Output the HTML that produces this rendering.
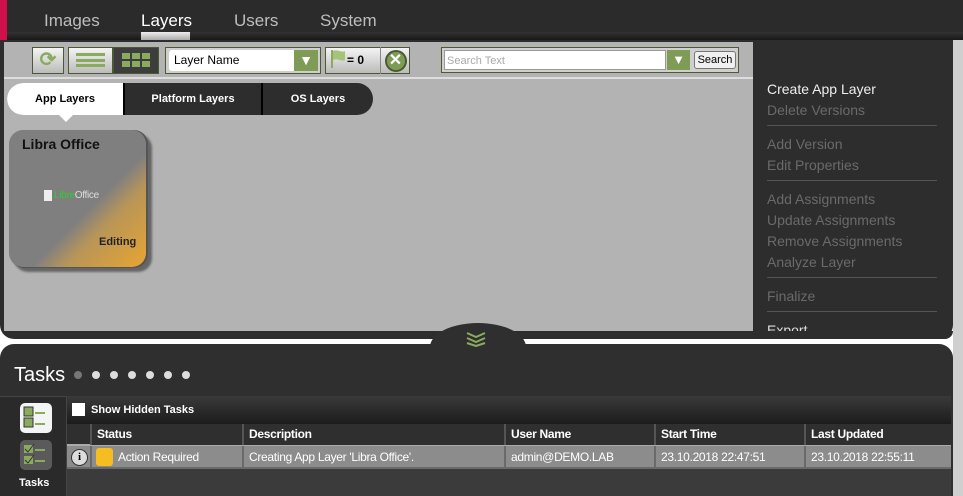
<!DOCTYPE html>
<html><head><style>
*{margin:0;padding:0;box-sizing:border-box}
body{width:963px;height:496px;overflow:hidden;background:#fff;font-family:"Liberation Sans",Arial,sans-serif;position:relative}
.a{position:absolute}
.tab{position:absolute;top:11px;font-size:17px;color:#bdbdbd}
.menu div{font-size:14px;color:#6a6a6a;height:21px;line-height:21px}
.menu hr{border:0;border-top:1px solid #555;margin:4px 16px 8px 0}
.th{position:absolute;top:424px;height:21px;line-height:21px;font-size:12px;font-weight:bold;color:#fff;border-left:2px solid #555;padding-left:5px;background:#2f2f2f;letter-spacing:-0.3px}
.td{position:absolute;top:446px;height:21px;line-height:22px;font-size:12px;color:#fff;border-left:2px solid #6a6a6a;padding-left:5px;background:#8c8c8c;letter-spacing:-0.3px}
.dot{position:absolute;top:371px;width:8px;height:8px;border-radius:50%;background:#ddd}
.btn{position:absolute;background:linear-gradient(#f4f4f4,#bbb);border:1px solid #4b5a35}
</style></head><body>
<div class="a" style="left:0;top:0;width:963px;height:40px;background:#2b2b2b"></div>
<div class="a" style="left:0;top:0;width:7px;height:42px;background:#d0104a"></div>
<div class="tab" style="left:44px">Images</div>
<div class="tab" style="left:141px;color:#fff">Layers</div>
<div class="tab" style="left:234px">Users</div>
<div class="tab" style="left:320px">System</div>
<div class="a" style="left:7px;top:32px;width:956px;height:10px;background:linear-gradient(#333,#111)"></div>
<div class="a" style="left:141px;top:32px;width:49px;height:10px;background:linear-gradient(#eee,#999)"></div>
<!-- main panel -->
<div class="a" style="left:0;top:40px;width:953px;height:299px;background:#2d2d2d;border-radius:0 0 14px 14px"></div>
<div class="a" style="left:953px;top:40px;width:10px;height:456px;background:#cfcfcf"></div>
<div class="a" style="left:4px;top:42px;width:749px;height:289px;background:#b3b3b3"></div>
<div class="a" style="left:4px;top:77px;width:749px;height:2px;background:#ddd"></div>
<!-- toolbar -->
<div class="btn" style="left:32px;top:47px;width:32px;height:27px;color:#8aab5e;font-size:20px;font-weight:bold;text-align:center;line-height:25px">⟳</div>
<div class="btn" style="left:68px;top:47px;width:45px;height:27px"><div style="margin:5px 7px;height:14px;border-top:3px solid #8aab5e;border-bottom:3px solid #8aab5e;position:relative"><div style="position:absolute;top:2.5px;left:0;right:0;height:3px;background:#8aab5e"></div></div></div>
<div class="a" style="left:113px;top:47px;width:46px;height:27px;background:#3d3d3d;border:1px solid #4b5a35;padding:5px 8px"><svg width="30" height="15"><g fill="#8aab5e"><rect x="0" y="0" width="8" height="6"/><rect x="10" y="0" width="8" height="6"/><rect x="20" y="0" width="8" height="6"/><rect x="0" y="8" width="8" height="6"/><rect x="10" y="8" width="8" height="6"/><rect x="20" y="8" width="8" height="6"/></g></svg></div>
<div class="a" style="left:165px;top:47px;width:156px;height:27px;border:1px solid #4b5a35;background:#cfcfcf"></div>
<div class="a" style="left:169px;top:50px;width:149px;height:21px;background:#fff;border-radius:3px;font-size:12px;line-height:21px;padding-left:5px">Layer Name</div>
<div class="a" style="left:294px;top:50px;width:24px;height:21px;background:#7e9c55;color:#fff;font-size:14px;text-align:center;line-height:21px">▼</div>
<div class="btn" style="left:325px;top:47px;width:85px;height:27px"></div>
<svg class="a" style="left:330px;top:49px" width="16" height="20"><path d="M2 1v18" stroke="#8aab5e" stroke-width="2"/><path d="M3 2c5-2 8 2 12 0v9c-4 2-7-2-12 0z" fill="#a5c47a"/></svg>
<div class="a" style="left:347px;top:53px;font-size:12px;font-weight:bold">= 0</div>
<div class="a" style="left:380px;top:47px;width:30px;height:27px;border-left:1px solid #888;display:flex;align-items:center;justify-content:center"><div style="width:22px;height:22px;border-radius:50%;background:#7e9c55;border:2px solid #4b5a35;color:#fff;font-weight:bold;font-size:16px;text-align:center;line-height:18px">✕</div></div>
<div class="a" style="left:441px;top:47px;width:298px;height:26px;border:1px solid #4b5a35;background:#cfcfcf"></div>
<div class="a" style="left:444px;top:50px;width:222px;height:20px;background:#fff;font-size:11px;color:#aaa;line-height:20px;padding-left:2px;border:1px solid #999">Search Text</div>
<div class="a" style="left:667px;top:50px;width:23px;height:20px;background:#7e9c55;color:#fff;font-size:13px;text-align:center;line-height:20px">▼</div>
<div class="a" style="left:694px;top:51px;width:42px;height:18px;background:#f0f0f0;border:1px solid #777;border-radius:3px;font-size:11px;text-align:center;line-height:16px">Search</div>
<!-- tabs -->
<div class="a" style="left:7px;top:83px;width:366px;height:32px;background:#2d2d2d;border-radius:16px"></div>
<div class="a" style="left:7px;top:83px;width:116px;height:32px;background:#fff;border-radius:16px 0 0 16px;font-size:11px;font-weight:bold;text-align:center;line-height:32px">App Layers</div>
<div class="a" style="left:58px;top:114px;width:0;height:0;border:8px solid transparent;border-top-color:#fff;border-bottom:0"></div>
<div class="a" style="left:123px;top:83px;width:2px;height:32px;background:#000"></div>
<div class="a" style="left:261px;top:83px;width:2px;height:32px;background:#000"></div>
<div class="a" style="left:125px;top:83px;width:136px;font-size:11px;font-weight:bold;color:#fff;text-align:center;line-height:32px">Platform Layers</div>
<div class="a" style="left:263px;top:83px;width:110px;font-size:11px;font-weight:bold;color:#fff;text-align:center;line-height:32px">OS Layers</div>
<!-- card -->
<div class="a" style="left:10px;top:130px;width:138px;height:138px;border-radius:14px;background:#555;box-shadow:4px 4px 2px #666"></div>
<div class="a" style="left:9px;top:130px;width:137px;height:137px;border-radius:14px;background:linear-gradient(135deg,#7f7f7f 58%,#b79559 70%,#e8a530 100%);overflow:hidden"></div>
<div class="a" style="left:22px;top:136px;font-size:14px;font-weight:bold;color:#111">Libra Office</div>
<div class="a" style="left:44px;top:190px;width:8px;height:11px;background:#eee"></div>
<div class="a" style="left:54px;top:190px;font-size:10px;color:#ddd;letter-spacing:-0.3px"><span style="color:#3c3">Libre</span>Office</div>
<div class="a" style="left:99px;top:236px;font-size:11px;font-weight:bold;color:#222">Editing</div>
<!-- right menu -->
<div class="a menu" style="left:767px;top:79px;width:186px">
<div style="color:#eee">Create App Layer</div><div>Delete Versions</div><hr>
<div>Add Version</div><div>Edit Properties</div><hr>
<div>Add Assignments</div><div>Update Assignments</div><div>Remove Assignments</div><div>Analyze Layer</div><hr>
<div>Finalize</div><hr>
<div style="color:#ddd;height:12px;overflow:hidden">Export</div>
</div>
<div class="a" style="left:753px;top:331px;width:200px;height:8px;background:#2d2d2d;border-radius:0 0 14px 0"></div>
<!-- bottom -->
<div class="a" style="left:0;top:344px;width:953px;height:152px;background:#2f2f2f;border-radius:14px 14px 0 0"></div>
<div class="a" style="left:430px;top:323px;width:96px;height:40px;background:#2f2f2f;border-radius:50% 50% 0 0/60% 60% 0 0"></div>
<svg class="a" style="left:466px;top:331px" width="20" height="16"><g fill="none" stroke="#8aab5e" stroke-width="2"><path d="M1 2l9 4 9-4M1 7l9 4 9-4M1 12l9 3 9-3"/></g></svg>
<div class="a" style="left:14px;top:364px;font-size:20px;color:#fff">Tasks</div>
<div class="dot" style="left:74px;background:#777"></div>
<div class="dot" style="left:92px"></div><div class="dot" style="left:110px"></div><div class="dot" style="left:128px"></div><div class="dot" style="left:146px"></div><div class="dot" style="left:164px"></div><div class="dot" style="left:182px"></div>
<div class="a" style="left:0;top:396px;width:67px;height:100px;background:#2a2a2a;border-right:1px solid #444;border-top:1px solid #444"></div>
<div class="a" style="left:20px;top:403px;width:32px;height:30px;border-radius:5px;background:#f4f4f4;padding:3px"><svg width="26" height="24"><rect x="1" y="1" width="9" height="9" fill="#8aab5e" stroke="#333"/><rect x="1" y="12" width="9" height="9" fill="#8aab5e" stroke="#333"/><path d="M12 7h10M12 18h10" stroke="#8aab5e" stroke-width="2"/></svg></div>
<div class="a" style="left:20px;top:440px;width:32px;height:30px;border-radius:5px;background:#5a5a5a;padding:3px"><svg width="26" height="24"><rect x="1" y="2" width="9" height="8" fill="#8aab5e"/><rect x="1" y="13" width="9" height="8" fill="#8aab5e"/><path d="M2 6l3 3 6-8M2 17l3 3 6-8" stroke="#333" fill="none"/><path d="M12 7h10M12 18h10" stroke="#8aab5e" stroke-width="2"/></svg></div>
<div class="a" style="left:19px;top:477px;font-size:11px;font-weight:bold;color:#fff">Tasks</div>
<div class="a" style="left:67px;top:396px;width:884px;height:100px;background:#3b3b3b"></div>
<div class="a" style="left:67px;top:396px;width:884px;height:28px;background:linear-gradient(#3a3a3a,#1c1c1c)"></div>
<div class="a" style="left:72px;top:403px;width:13px;height:13px;background:#fff"></div>
<div class="a" style="left:91px;top:404px;font-size:11px;font-weight:bold;color:#fff">Show Hidden Tasks</div>
<div class="a" style="left:67px;top:424px;width:884px;height:22px;background:#2f2f2f;border-bottom:2px solid #aaa"></div>
<div class="th" style="left:90px;width:152px">Status</div>
<div class="th" style="left:242px;width:262px">Description</div>
<div class="th" style="left:504px;width:150px">User Name</div>
<div class="th" style="left:654px;width:150px">Start Time</div>
<div class="th" style="left:804px;width:147px">Last Updated</div>
<div class="a" style="left:67px;top:446px;width:884px;height:23px;background:#8c8c8c;border-bottom:2px solid #6a6a6a"></div>
<div class="a" style="left:71px;top:449px;width:17px;height:17px;border-radius:50%;background:#ddd;border:1px solid #333;font:bold 11px 'Liberation Serif',serif;text-align:center;line-height:15px">i</div>
<div class="td" style="left:90px;width:152px;padding-left:26px">Action Required</div>
<div class="a" style="left:96px;top:448px;width:17px;height:18px;background:#f5bd1f;border-radius:3px"></div>
<div class="td" style="left:242px;width:262px">Creating App Layer 'Libra Office'.</div>
<div class="td" style="left:504px;width:150px">admin@DEMO.LAB</div>
<div class="td" style="left:654px;width:150px">23.10.2018 22:47:51</div>
<div class="td" style="left:804px;width:147px">23.10.2018 22:55:11</div>
</body></html>
